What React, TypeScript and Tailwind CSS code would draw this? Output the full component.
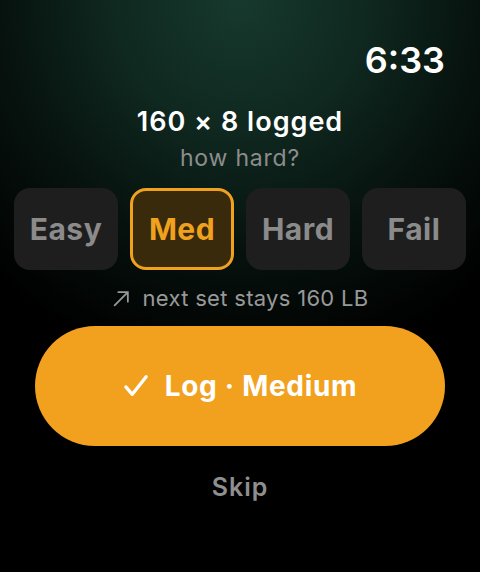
export default function App() {
  const options = ['Easy', 'Med', 'Hard', 'Fail'];
  const selected = 'Med';

  return (
    <div className="relative h-[572px] w-[480px] overflow-hidden bg-black font-['Inter',sans-serif]">
      {/* top glow */}
      <div className="pointer-events-none absolute inset-0 bg-[radial-gradient(ellipse_75%_65%_at_50%_0%,#17392d_0%,#0f2820_35%,#07130f_65%,#000000_100%)]" />

      <div className="relative flex h-full flex-col">
        {/* TIME */}
        <div className="flex justify-end pt-[38px] pr-[35px]">
          <span className="text-[36px] leading-[44px] font-semibold text-white">6:33</span>
        </div>

        {/* TITLE */}
        <div className="mt-[22px] flex flex-col items-center">
          <h1 className="text-[27px] leading-[36px] font-semibold tracking-[1px] text-white">160 × 8 logged</h1>
          <p className="mt-[3px] text-[23px] leading-[30px] tracking-[0.8px] text-[#8d8d8d]">how hard?</p>
        </div>

        {/* OPTIONS */}
        <div className="mt-[15px] grid grid-cols-4 gap-[12px] px-[14px]">
          {options.map((opt) => {
            const on = opt === selected;
            return (
              <div
                key={opt}
                className={
                  on
                    ? 'flex h-[82px] items-center justify-center rounded-[16px] border-[3px] border-[#f0a21f] bg-[#3a2a0c] text-[30px] font-bold tracking-[0.5px] text-[#f0a21f]'
                    : 'flex h-[82px] items-center justify-center rounded-[16px] bg-[#1e1e1e] text-[30px] font-bold tracking-[0.5px] text-[#8b8b8b]'
                }
              >
                {opt}
              </div>
            );
          })}
        </div>

        {/* HINT */}
        <div className="mt-[14px] flex items-center justify-center gap-[12px] text-[22px] leading-[28px] tracking-[0.3px] text-[#999999]">
          <svg width="19" height="19" viewBox="0 0 18 18" fill="none" stroke="#999999" strokeWidth="1.7" strokeLinecap="round">
            <path d="M2.5 15.5 L15 3 M6 3 H15 V12" />
          </svg>
          <span>next set stays 160 LB</span>
        </div>

        {/* LOG BUTTON */}
        <div className="mt-[14px] px-[35px]">
          <div className="flex h-[120px] items-center justify-center gap-[16px] rounded-full bg-[#f2a11f] text-[28px] font-bold tracking-[0.7px] text-white">
            <svg width="26" height="24" viewBox="0 0 28 26" fill="none" stroke="white" strokeWidth="3.6" strokeLinecap="round" strokeLinejoin="round">
              <path d="M3 14 L10 22 L25 3" />
            </svg>
            <span>Log · Medium</span>
          </div>
        </div>

        {/* SKIP */}
        <div className="mt-[26px] flex justify-center">
          <span className="text-[25px] leading-[30px] font-semibold tracking-[1px] text-[#8f8f8f]">Skip</span>
        </div>
      </div>
    </div>
  );
}
